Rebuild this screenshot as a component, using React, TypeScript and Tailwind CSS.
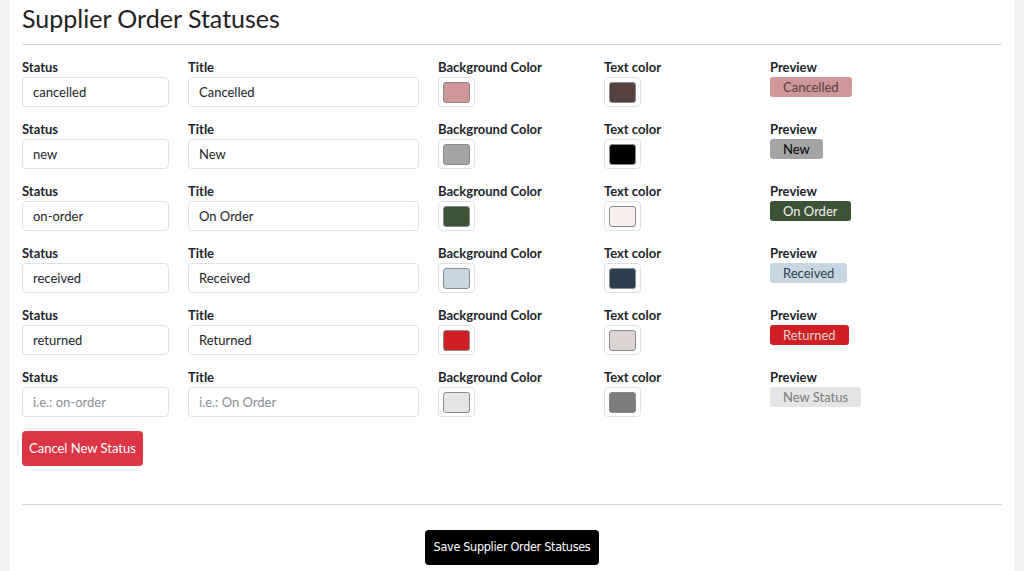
import { useState } from 'react';

type Row = {
  status: string;
  title: string;
  bg: string;
  fg: string;
  placeholder?: boolean;
};

const rows: Row[] = [
  { status: 'cancelled', title: 'Cancelled', bg: '#cf9797', fg: '#553f3f' },
  { status: 'new', title: 'New', bg: '#a4a4a4', fg: '#000000' },
  { status: 'on-order', title: 'On Order', bg: '#3a5435', fg: '#f9eeee' },
  { status: 'received', title: 'Received', bg: '#c6d7e1', fg: '#2b3f4f' },
  { status: 'returned', title: 'Returned', bg: '#cf1f24', fg: '#dcd3d3' },
  { status: '', title: '', bg: '#e4e4e4', fg: '#7c7c7c', placeholder: true },
];

function Swatch({ color }: { color: string }) {
  return (
    <div className="w-[37px] h-[30px] border border-[#dee2e6] rounded-[4px] bg-white flex items-center justify-center">
      <div
        className="w-[27px] h-[21px] rounded-[3px] border border-[#8a8a8a]"
        style={{ backgroundColor: color }}
      />
    </div>
  );
}

function StatusRow({ row }: { row: Row }) {
  const label = 'block text-[13px] font-bold text-[#212529] leading-[16px] mb-[2px]';
  const input =
    'w-full h-[30px] px-[10px] text-[13px] text-[#212529] border border-[#dee2e6] rounded-[4px] bg-white outline-none placeholder:text-[#8a8f94]';
  return (
    <div className="grid grid-cols-[147px_231px_147px_147px_1fr] gap-x-[19px] mb-[14px]">
      <div>
        <label className={label}>Status</label>
        <input className={input} defaultValue={row.status} placeholder={row.placeholder ? 'i.e.: on-order' : ''} />
      </div>
      <div>
        <label className={label}>Title</label>
        <input className={input} defaultValue={row.title} placeholder={row.placeholder ? 'i.e.: On Order' : ''} />
      </div>
      <div>
        <label className={label}>Background Color</label>
        <Swatch color={row.bg} />
      </div>
      <div>
        <label className={label}>Text color</label>
        <Swatch color={row.fg} />
      </div>
      <div>
        <label className={label}>Preview</label>
        <span
          className="block w-fit px-[13px] h-[20px] leading-[20px] text-[13px] rounded-[3px]"
          style={{ backgroundColor: row.bg, color: row.fg }}
        >
          {row.placeholder ? 'New Status' : row.title}
        </span>
      </div>
    </div>
  );
}

export default function App() {
  const [adding, setAdding] = useState(true);

  return (
    <div className="min-h-screen bg-[#f2f2f2] px-[10px] font-['Lato',sans-serif] text-[#212529]">
      <div className="bg-white px-[12px] pt-[1px] pb-[20px] h-[571px] overflow-hidden">
        <h2 className="text-[25px] font-normal leading-[34px] text-[#222]">Supplier Order Statuses</h2>
        <hr className="border-t border-[#d8d8d8] mt-[9px] mb-[14px]" />

        {rows.filter((r) => adding || !r.placeholder).map((row, i) => (
          <StatusRow key={i} row={row} />
        ))}

        <button
          onClick={() => setAdding(!adding)}
          className="bg-[#dc3545] text-white text-[13px] h-[35px] px-[7px] rounded-[4px]"
        >
          Cancel New Status
        </button>

        <hr className="border-t border-[#d8d8d8] mt-[38px] mb-[25px]" />

        <div className="flex justify-center">
          <button className="bg-black text-white h-[35px] px-[9px] rounded-[4px] text-[12.5px] tracking-[-0.3px] font-['DejaVu_Sans_Condensed','Roboto',sans-serif]">
            Save Supplier Order Statuses
          </button>
        </div>

        <h2 className="text-[25px] font-normal leading-none mt-[3px] text-[#222]">Product Order Statuses</h2>
      </div>
    </div>
  );
}
